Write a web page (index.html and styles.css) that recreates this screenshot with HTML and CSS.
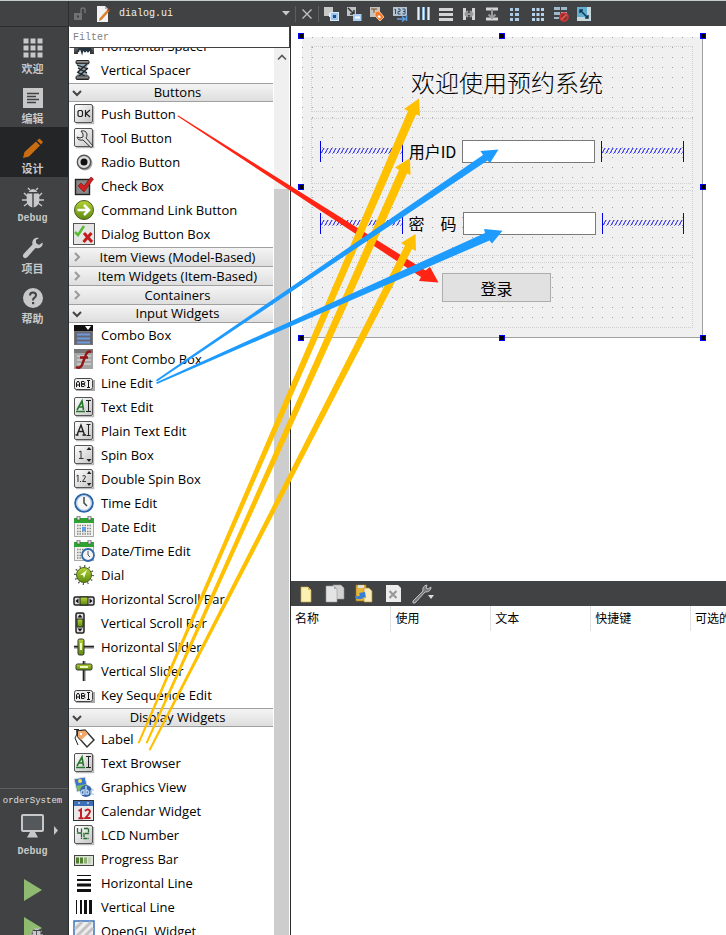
FILE: index.html
```html
<!DOCTYPE html>
<html lang="zh-CN">
<head>
<meta charset="utf-8">
<title>dialog.ui - orderSystem</title>
<link rel="stylesheet" href="styles.css">
</head>
<body>
<svg class="defs" aria-hidden="true">
  <defs>
    <linearGradient id="tile" x1="0" y1="0" x2="1" y2="1"><stop offset="0" stop-color="#fff"/><stop offset="1" stop-color="#c4c4c4"/></linearGradient>
    <linearGradient id="green" x1="0" y1="0" x2="0" y2="1"><stop offset="0" stop-color="#b5d334"/><stop offset="1" stop-color="#5d8a12"/></linearGradient>
    <linearGradient id="metal" x1="0" y1="0" x2="0" y2="1"><stop offset="0" stop-color="#bbb"/><stop offset="1" stop-color="#333"/></linearGradient>
    <symbol id="frame" viewBox="0 0 22 22"><path d="M3 20.500h17.500V3" fill="none" stroke="#bbb" stroke-width="1.500"/><rect x="1.500" y="1.500" width="18" height="18" rx="1.500" fill="url(#tile)" stroke="#555"/></symbol>
    <symbol id="cal" viewBox="0 0 22 22"><rect x="1.500" y="2.500" width="19" height="18" fill="#f2f2ee" stroke="#aaa"/><path d="M1 2h20v5H1z" fill="#2fa32f"/><path d="M4 0h3v4H4zM15 0h3v4h-3z" fill="#ddd" stroke="#555" stroke-width=".7"/><path d="M4 9.500h14M4 12.500h14M4 15.500h14M4 18h14" stroke="#888" stroke-width="1.500" stroke-dasharray="1.500 1"/></symbol>
    <symbol id="abi" viewBox="0 0 22 22"><path d="M3 18h18V8" fill="none" stroke="#aaa" stroke-width="2"/><rect x="1.500" y="6.500" width="18" height="11" rx="2" fill="#eee" stroke="#444"/><path d="M3.500 15v-4l1.500-2 1.500 2v4M3.500 13h3M8.500 9.500v5h2.500l1-1.200-1-1.300H8.500h2.500l1-1.200-1-1.300zM14 8.500h3M15.500 8.500v7M14 15.500h3" fill="none" stroke="#111"/></symbol>
    <symbol id="bug" viewBox="0 0 22 22"><path d="M6.500 5Q11-1 15.500 5zM5 6.500H10.300V20.500Q5 19 4.500 13zM17 6.500H11.700V20.500q5.300-1.500 5.800-7.500z" fill="currentColor"/><path d="M5 9L2 6M17 9l3-3M5 13H0M17 13h5M6 16l-4 3M16 16l4 3M8 3L6 1M14 3l2-2" stroke="currentColor" stroke-width="1.400"/></symbol>
    <symbol id="wrench" viewBox="0 0 22 22"><path d="M20.500 5.500l-3.500 2.500-3-2 0-3L17 1C12.500 0 9.500 3.500 10.500 7.500L1.500 17q-1.500 3 1 4 1.500 .5 3-1L13.500 11C18 12 21.500 9 20.500 5.500z" fill="currentColor"/></symbol>
    <symbol id="down" viewBox="0 0 10 8"><path d="M1 2l4 4 4-4" fill="none" stroke="#444" stroke-width="2"/></symbol>
    <symbol id="right" viewBox="0 0 10 10"><path d="M3 1l4 4-4 4" fill="none" stroke="#999" stroke-width="2"/></symbol>
    <pattern id="zig" width="4" height="6" patternUnits="userSpaceOnUse"><path d="M0.500 6L1.500 3.500L3.500 0.500" stroke="#0000e6" fill="none"/></pattern>
  </defs>
</svg>

<div class="app">
  <header class="topbar">
    <div class="filebar">
      <svg class="i14" viewBox="0 0 14 14"><path d="M1 6h8v7H1z" fill="#707274"/><path d="M8 6V3q0-2 2-2t2 2v3" fill="none" stroke="#707274" stroke-width="1.500"/><path d="M4 8.500h2v2H4z" fill="#404244"/></svg>
      <svg class="i16" viewBox="0 0 16 16"><path d="M2 0h8l3 3v13H2z" fill="#f2f2f2"/><path d="M10 0l3 3h-3z" fill="#aaa"/><path d="M4.500 12.500L13 3l2 1.500-8.500 9.500L4 15z" fill="#d9822b"/><path d="M12 4l1.500-1.500L15.500 4 14 5.500z" fill="#a3421a"/></svg>
      <select class="file" aria-label="Open file"><option>dialog.ui</option></select>
      <svg class="drop" viewBox="0 0 8 5"><path d="M0 0h8L4 4.500z" fill="#c8c8c8"/></svg>
    </div>
    <div class="tools">
      <button class="close" aria-label="Close"><svg viewBox="0 0 16 16"><path d="M3.500 3.500l9 9M12.500 3.500l-9 9" stroke="#c4c4c4" stroke-width="1.300"/></svg></button>
      <button aria-label="Edit widgets"><svg viewBox="0 0 16 16"><path d="M1 1h9v9H1z" fill="#c8c8c8"/><path d="M6 7h4v4H6z" fill="#f2f2f2"/><rect x="7.500" y="6.500" width="8" height="8" fill="#9cc4ec" stroke="#dbe9f7"/><path d="M10 9h3v3h-3z" fill="#124f91"/></svg></button>
      <button aria-label="Edit signals"><svg viewBox="0 0 16 16"><path d="M1 1h9v9H1z" fill="#bfc3c6"/><path d="M2 2l6 6M8 4v4H4" fill="none" stroke="#333" stroke-width="1.500"/><path d="M7 8h8.500v7H7z" fill="#a9cdf0"/><path d="M9 11.500h5" stroke="#fff" stroke-width="2"/></svg></button>
      <button aria-label="Edit buddies"><svg viewBox="0 0 16 16"><path d="M1 1h10v10H1z" fill="#c5c2bf"/><path d="M2 3h6M5 3v4" stroke="#7a4b2b"/><path d="M6 6l4-1 5 6-4 4-5-5z" fill="#f2792b" stroke="#f8c79f"/><path d="M10 9l2 2-1.500 1.500-2-2z" fill="#fff"/></svg></button>
      <button aria-label="Edit tab order"><svg viewBox="0 0 16 16"><path d="M1 1h14v9H1z" fill="#b7c3cf"/><path d="M2.500 4l1-1v5M6 3h2v2.500H6V8h2.500M10.500 3h2.500v5h-2.500M11 5.500h2" fill="none" stroke="#285377"/><path d="M5 13h7M10 10.500l3 2.500-3 2.500M14.500 9v6" fill="none" stroke="#5f9ee0" stroke-width="1.500"/></svg></button>
      <button aria-label="Lay out horizontally"><svg viewBox="0 0 16 16"><path d="M2 1h3v13H2zM7 1h3v13H7zM12 1h3v13h-3z" fill="#8fb8da"/><path d="M3.500 1v13M8.500 1v13M13.500 1v13" stroke="#e5f2fc"/></svg></button>
      <button aria-label="Lay out vertically"><svg viewBox="0 0 16 16"><path d="M1 2h14v3H1zM1 7h14v3H1zM1 12h14v3H1z" fill="#d4d4d4"/></svg></button>
      <button aria-label="Horizontal splitter"><svg viewBox="0 0 16 16"><path d="M2 2h3v12H2zM11 2h3v12h-3z" fill="#d4d4d4"/><path d="M4 8h8M4 8l3-3M4 8l3 3M12 8L9 5M12 8l-3 3" stroke="#9b9b9b" stroke-width="2"/></svg></button>
      <button aria-label="Vertical splitter"><svg viewBox="0 0 16 16"><path d="M2 1.500h12v3H2zM2 11.500h12v3H2z" fill="#d4d4d4"/><path d="M8 3v8M4.500 8.500L8 12l3.500-3.500" fill="none" stroke="#9b9b9b" stroke-width="2"/></svg></button>
      <button aria-label="Form layout"><svg viewBox="0 0 16 16"><path d="M3 2h3v3H3zM8 2h4v3H8zM3 7h3v3H3zM8 7h4v3H8zM3 12h3v3H3zM8 12h4v3H8z" fill="#a9cbe8"/></svg></button>
      <button aria-label="Grid layout"><svg viewBox="0 0 16 16"><path d="M2 2h3v3H2zM6.500 2h3v3h-3zM11 2h3v3h-3zM2 7h3v3H2zM6.500 7h3v3h-3zM11 7h3v3h-3zM2 12h3v3H2zM6.500 12h3v3h-3zM11 12h3v3h-3z" fill="#b5d3ec"/></svg></button>
      <button aria-label="Break layout"><svg viewBox="0 0 16 16"><path d="M1 1h6v3H1zM8 1h6v3H8zM1 6h6v3H1zM8 6h6v3H8zM1 11h5v2H1z" fill="#9fb9cc"/><circle cx="11" cy="11" r="4" fill="#8d3030" stroke="#d83535" stroke-width="1.600"/><path d="M8.500 13.500l5-5" stroke="#e4605c" stroke-width="1.600"/></svg></button>
      <button aria-label="Adjust size"><svg viewBox="0 0 16 16"><path d="M1 1h14v14H1z" fill="#c8d7dc"/><path d="M1 1h10v10H1z" fill="#62aed0"/><path d="M4 4l8 8M4 7V4h3M12 9v3H9" fill="none" stroke="#12384f" stroke-width="1.500"/></svg></button>
    </div>
  </header>

  <nav class="modes">
    <button class="mode"><svg viewBox="0 0 22 22"><path d="M1 1h6v6H1zM8 1h6v6H8zM15 1h6v6h-6zM1 8h6v6H1zM8 8h6v6H8zM15 8h6v6h-6zM1 15h6v6H1zM8 15h6v6H8zM15 15h6v6h-6z" fill="#c8c8c8" stroke="#404244"/></svg><span>欢迎</span></button>
    <button class="mode"><svg viewBox="0 0 22 22"><path d="M1 1h20v20H1z" fill="#c8c8c8"/><path d="M5 6.500h12M5 9.500h9M5 12.500h12M5 15.500h9" stroke="#404244" stroke-width="1.500"/></svg><span>编辑</span></button>
    <button class="mode active"><svg viewBox="0 0 22 22"><path d="M1 21l1.500-6L14 4.500 18 8.500 7 19.500zM15 3.500L17.500 1.500 21 5 19 7.500z" fill="#c96c12"/></svg><span>设计</span></button>
    <button class="mode"><svg viewBox="0 0 22 22"><use href="#bug"/></svg><span class="latin">Debug</span></button>
    <button class="mode"><svg viewBox="0 0 22 22"><use href="#wrench"/></svg><span>项目</span></button>
    <button class="mode"><svg viewBox="0 0 22 22"><circle cx="11" cy="11" r="10" fill="#c8c8c8"/><path d="M8 8.500Q8 5.500 11 5.500t3 2.700q0 1.500-1.500 2.500T11 13.500" fill="none" stroke="#404244" stroke-width="2"/><path d="M10 15h2.200v2.200H10z" fill="#404244"/></svg><span>帮助</span></button>
    <div class="kit">
      <div class="project">orderSystem</div>
      <button class="target" aria-label="Kit"><svg viewBox="0 0 40 26"><rect x="1" y="1" width="23" height="18" rx="2" fill="#c8c8c8"/><path d="M3 3h19v14H3z" fill="#55585a"/><path d="M10 19h5l3 5.500H7z" fill="#c8c8c8"/><path d="M34 13l4 4.500-4 4.500z" fill="#c8c8c8"/></svg></button>
      <div class="latin kitname">Debug</div>
      <button class="run" aria-label="Run"><svg viewBox="0 0 20 24"><path d="M1 1l18 11L1 23z" fill="#8fbb70"/></svg></button>
      <button class="run" aria-label="Start debugging"><svg viewBox="0 0 20 24"><path d="M1 1l18 11L1 23z" fill="#8fbb70"/><g transform="translate(7 11) scale(.6)" color="#c8c8c8"><circle cx="11" cy="11" r="8" fill="#404244"/><use href="#bug" width="22" height="22"/></g></svg></button>
    </div>
  </nav>

  <aside class="box">
    <input class="filter" type="text" placeholder="Filter" aria-label="Filter">
    <div class="scroller">
      <div class="widgets">
        <ul class="first">
          <li><svg viewBox="0 0 22 22"><path d="M1 1h4v18H1zM17 1h4v18h-4z" fill="url(#metal)"/><path d="M5 5l4 12 3-12 3 12 3-12M5 17l4-12 3 12 3-12 3 12" fill="none" stroke="#26343e" stroke-width="2"/></svg>Horizontal Spacer</li>
          <li><svg viewBox="0 0 22 22"><rect x="3" y="1.500" width="13" height="3.500" rx="1" fill="url(#metal)" stroke="#222"/><path d="M4 5h11l-2 6 2 6H4l2-6z" fill="#8da6b4"/><path d="M4 6l11 4M5 9l9 5M4 13l8 4M14 5L5 13M15 9l-9 8" stroke="#222" stroke-width="1.300"/><rect x="3" y="17" width="13" height="3.500" rx="1" fill="url(#metal)" stroke="#222"/></svg>Vertical Spacer</li>
        </ul>
        <button class="cat"><svg class="chev"><use href="#down"/></svg><span>Buttons</span></button>
        <ul>
          <li><svg viewBox="0 0 22 22"><use href="#frame"/><path d="M5 8.500l1-1h2.500l1 1v4l-1 1H6l-1-1zM12.500 7v7M17 7l-4 3.500 4 3.500" fill="none" stroke="#222" stroke-width="1.200"/></svg>Push Button</li>
          <li><svg viewBox="0 0 22 22"><use href="#frame"/><path d="M8 4q5-1 6 3 0 3-1 4l7 8-2 1.500-8-7.500q-5 1-6-3l3 1 3-1V7z" fill="#ddd" stroke="#333"/></svg>Tool Button</li>
          <li><svg viewBox="0 0 22 22"><circle cx="12" cy="12" r="7.500" fill="#aaa"/><circle cx="11" cy="11" r="6.700" fill="#ddd" stroke="#555" stroke-width="1.400"/><circle cx="11" cy="11" r="3.500" fill="#111"/></svg>Radio Button</li>
          <li><svg viewBox="0 0 22 22"><rect x="2.500" y="4.500" width="14" height="15" fill="#888" stroke="#222" stroke-width="1.400"/><path d="M5 11l3-3 3 3 7-9 2.500 2L11 17z" fill="#d21f1f" stroke="#7a0c0c" stroke-width=".6"/></svg>Check Box</li>
          <li><svg viewBox="0 0 22 22"><circle cx="11" cy="11" r="9.500" fill="url(#green)" stroke="#4c5a1c"/><path d="M4.500 11H16M11 6l5 5-5 5" fill="none" stroke="#fff" stroke-width="2.500"/></svg>Command Link Button</li>
          <li><svg viewBox="0 0 22 22"><rect x=".5" y=".5" width="21" height="21" fill="#e5e5e5" stroke="#555"/><path d="M2 9l3 3 6-9" fill="none" stroke="#58bb32" stroke-width="2.500"/><path d="M11 10l8 9M18.500 10l-8 9" stroke="#c51b1b" stroke-width="3"/></svg>Dialog Button Box</li>
        </ul>
        <button class="cat"><svg class="chev"><use href="#right"/></svg><span>Item Views (Model-Based)</span></button>
        <button class="cat"><svg class="chev"><use href="#right"/></svg><span>Item Widgets (Item-Based)</span></button>
        <button class="cat"><svg class="chev"><use href="#right"/></svg><span>Containers</span></button>
        <button class="cat"><svg class="chev"><use href="#down"/></svg><span>Input Widgets</span></button>
        <ul>
          <li><svg viewBox="0 0 22 22"><path d="M1 1h19v20H1z" fill="#777"/><path d="M1 1h19v6H1z" fill="#111"/><path d="M12 2h6l-3 4z" fill="#fff"/><path d="M2 8h17v12H2z" fill="#667"/><path d="M4 10.500h13M4 14.500h13M4 18.500h13" stroke="#6c9bdc" stroke-width="2"/></svg>Combo Box</li>
          <li><svg viewBox="0 0 22 22"><path d="M1 1h19v20H1z" fill="#a4a4a4"/><path d="M1 1h19v4H1z" fill="#777"/><path d="M4 8h14M4 12h14M4 16h14" stroke="#c4c4c4" stroke-width="2"/><path d="M18 4q-4-2-6 5L9 17q-2 4-6 2M7 9.500h8" fill="none" stroke="#941414" stroke-width="2.400"/></svg>Font Combo Box</li>
          <li><svg viewBox="0 0 22 22"><use href="#abi"/></svg>Line Edit</li>
          <li><svg viewBox="0 0 22 22"><use href="#frame"/><path d="M4 14l5-9 1.500 9M6 11h4M3 15.500h9" fill="none" stroke="#27772d" stroke-width="1.600"/><path d="M13 4.500h5M15.500 4.500v11M13 15.500h5" stroke="#222"/></svg>Text Edit</li>
          <li><svg viewBox="0 0 22 22"><use href="#frame"/><path d="M4 15l4-10 3.500 10M5.500 11.500h5M2.500 15h3M9.500 15H13" fill="none" stroke="#222" stroke-width="1.400"/><path d="M13.500 4.500h4M15.500 4.500v11M13.500 15.500h4" stroke="#222"/></svg>Plain Text Edit</li>
          <li><svg viewBox="0 0 22 22"><use href="#frame"/><path d="M6 8l2-1v7M6 14.500h4.500" fill="none" stroke="#333"/><path d="M13.500 6L16 3l2.500 3zM13.500 15h5L16 18z" fill="#222"/></svg>Spin Box</li>
          <li><svg viewBox="0 0 22 22"><use href="#frame"/><path d="M3.500 8L5 7v7M7 13.500h1M9.500 8q3-1.500 3 1l-3 4.500H13" fill="none" stroke="#333"/><path d="M14 6l2-3 2.500 3zM14 15h4.500L16 18z" fill="#222"/></svg>Double Spin Box</li>
          <li><svg viewBox="0 0 22 22"><circle cx="11" cy="11" r="8.800" fill="#eee" stroke="#2d65a8" stroke-width="2"/><circle cx="11" cy="11" r="7.300" fill="#f8f8f8" stroke="#aac8e9"/><path d="M11 5v6l3 3" fill="none" stroke="#444" stroke-width="1.500"/></svg>Time Edit</li>
          <li><svg viewBox="0 0 22 22"><use href="#cal"/><path d="M9 11h4v4H9z" fill="#5e9ff0"/></svg>Date Edit</li>
          <li><svg viewBox="0 0 22 22"><use href="#cal"/><circle cx="15" cy="15" r="6" fill="#f4f4f4" stroke="#3269ac" stroke-width="1.800"/><path d="M15 11v4l2 2" fill="none" stroke="#555"/></svg>Date/Time Edit</li>
          <li><svg viewBox="0 0 22 22"><circle cx="11" cy="11" r="9" fill="none" stroke="#555" stroke-width="2" stroke-dasharray="1.200 3.500"/><circle cx="11" cy="11" r="7.500" fill="url(#green)" stroke="#48611a"/><path d="M7 11l7-5-3 8-1-3z" fill="#f4ffd8"/></svg>Dial</li>
          <li><svg viewBox="0 0 22 22"><rect x="1" y="9" width="20" height="8" rx="1.500" fill="#ddd" stroke="#222" stroke-width="1.500"/><path d="M7 9h8v8H7z" fill="url(#green)" stroke="#222"/><path d="M5.500 10.500v5L2.500 13zM16.500 10.500v5l3-2.500z" fill="#111"/></svg>Horizontal Scroll Bar</li>
          <li><svg viewBox="0 0 22 22"><rect x="3" y="1" width="8" height="20" rx="1.500" fill="#ddd" stroke="#222" stroke-width="1.500"/><path d="M4 7h6v8H4z" fill="url(#green)" stroke="#222"/><path d="M4.500 5.500h5L7 2.500zM4.500 16.500h5L7 19.500z" fill="#111"/></svg>Vertical Scroll Bar</li>
          <li><svg viewBox="0 0 22 22"><path d="M1 11h20" stroke="#777" stroke-width="3"/><path d="M1 10.500h20" stroke="#222"/><rect x="5" y="3" width="6" height="16" rx="1.500" fill="url(#green)" stroke="#333"/><path d="M8 7v7" stroke="#eff8bd" stroke-width="2"/></svg>Horizontal Slider</li>
          <li><svg viewBox="0 0 22 22"><path d="M11 1v20" stroke="#777" stroke-width="3"/><path d="M10.500 1v20" stroke="#222"/><rect x="3" y="4" width="16" height="6" rx="1.500" fill="url(#green)" stroke="#333"/><path d="M7 7h8" stroke="#eff8bd" stroke-width="2"/></svg>Vertical Slider</li>
          <li><svg viewBox="0 0 22 22"><use href="#abi"/></svg>Key Sequence Edit</li>
        </ul>
        <button class="cat"><svg class="chev"><use href="#down"/></svg><span>Display Widgets</span></button>
        <ul>
          <li><svg viewBox="0 0 22 22"><path d="M4 3l8-1 9 10-7 7L5 9z" fill="#fff" stroke="#333" stroke-width="1.500"/><path d="M5 3.500l7-1 3 3.500-7 6-3-3z" fill="#f1a867"/><path d="M1 1.500h5M4 1v5l-2 4 3 7" fill="none" stroke="#222"/><circle cx="8" cy="6" r="1.200" fill="#fff"/></svg>Label</li>
          <li><svg viewBox="0 0 22 22"><use href="#frame"/><path d="M4 14l5-9 1.500 9M6 11h4M3 15.500h9" fill="none" stroke="#27772d" stroke-width="1.600"/><path d="M13 4.500h5M15.500 4.500v11M13 15.500h5" stroke="#222"/></svg>Text Browser</li>
          <li><svg viewBox="0 0 22 22"><path d="M1 3l11-2 3 12-11 3z" fill="#3975cf" stroke="#ddd"/><path d="M3 10l10-2 1 5-9 2z" fill="#7aba60"/><circle cx="7" cy="5" r="2" fill="#f1e353"/><circle cx="13" cy="15" r="6" fill="#3767a8"/><path d="M8 17q0-3 3-3v4q-3 1-3-1M13 10v8h2q2-3-2-4M21 14q-3-1-3 2t3 2" fill="none" stroke="#b8d2ef" stroke-width="1.500"/></svg>Graphics View</li>
          <li><svg viewBox="0 0 22 22"><rect x=".5" y=".5" width="20" height="20" fill="#e9e9e9" stroke="#333"/><path d="M1 1h19v5H1z" fill="#3c6fb5"/><path d="M5 3h2M14 3h2" stroke="#fff"/><path d="M5.500 11L8 9.500v9M5.500 18.300h5M12 11q3-3 5 0 0 2-4.500 7h5" fill="none" stroke="#c41e22" stroke-width="2"/></svg>Calendar Widget</li>
          <li><svg viewBox="0 0 22 22"><use href="#frame"/><path d="M4.500 4v5h4V4M8.500 9v6M11 4.500h4.500v5H11v5h4.500" fill="none" stroke="#246a2c" stroke-width="1.300" stroke-dasharray="4 .6"/></svg>LCD Number</li>
          <li><svg viewBox="0 0 22 22"><rect x="1.500" y="7.500" width="19" height="10" fill="#dce5d5" stroke="#444"/><path d="M3 9.500h3v6H3zM7 9.500h3v6H7z" fill="#4f7f2d"/><path d="M11 9.500h3v6h-3z" fill="#8ead79"/><path d="M15 9.500h3v6h-3z" fill="#c2d0b8"/></svg>Progress Bar</li>
          <li><svg viewBox="0 0 22 22"><path d="M4 3.500h14" stroke="#111"/><path d="M4 8h14" stroke="#111" stroke-width="2"/><path d="M4 13h14M4 18.500h14" stroke="#111" stroke-width="3"/></svg>Horizontal Line</li>
          <li><svg viewBox="0 0 22 22"><path d="M3.500 4v14" stroke="#111"/><path d="M8 4v14" stroke="#111" stroke-width="2"/><path d="M12.500 4v14M17.500 4v14" stroke="#111" stroke-width="3"/></svg>Vertical Line</li>
          <li><svg viewBox="0 0 22 22"><rect x="1" y="1" width="20" height="20" fill="#eee" stroke="#3b73ba" stroke-width="1.500"/><path d="M2 9l7-7M2 18L18 2M8 20L20 8M15 20l5-5" stroke="#c3c3c3" stroke-width="3"/></svg>OpenGL Widget</li>
        </ul>
      </div>
      <div class="scrollbar"><svg viewBox="0 0 10 8"><path d="M1 6.500l4-4 4 4" fill="none" stroke="#555" stroke-width="1.600"/></svg><div class="thumb"></div></div>
    </div>
  </aside>

  <main class="work">
    <section class="canvas">
      <form class="dialog">
        <div class="row title"><h1>欢迎使用预约系统</h1></div>
        <div class="row field">
          <svg class="spacer"><rect y="7" width="100%" height="6" fill="url(#zig)"/></svg>
          <label for="uid">用户ID</label><input id="uid" type="text">
          <svg class="spacer"><rect y="7" width="100%" height="6" fill="url(#zig)"/></svg>
        </div>
        <div class="row field">
          <svg class="spacer"><rect y="7" width="100%" height="6" fill="url(#zig)"/></svg>
          <label for="pwd">密　码</label><input id="pwd" type="text">
          <svg class="spacer"><rect y="7" width="100%" height="6" fill="url(#zig)"/></svg>
        </div>
        <div class="row submit"><button type="button">登录</button></div>
        <i class="grip t l"></i><i class="grip t c"></i><i class="grip t r"></i>
        <i class="grip m l"></i><i class="grip m r"></i>
        <i class="grip b l"></i><i class="grip b c"></i><i class="grip b r"></i>
      </form>
    </section>
    <section class="actions">
      <div class="actionbar">
        <button aria-label="New"><svg viewBox="0 0 20 20"><path d="M5 3h7l3 3v12H5z" fill="#fbf1b0" stroke="#c7a84a" stroke-width=".7"/><path d="M12 3l3 3h-3z" fill="#d3b557"/></svg></button>
        <button aria-label="Copy"><svg viewBox="0 0 20 20"><path d="M8 1h8l3 3v11H8z" fill="#d2d2d2" stroke="#999" stroke-width=".6"/><path d="M1 2h8l3 3v13H1z" fill="#e4e4e4" stroke="#999" stroke-width=".6"/><path d="M9 2l3 3H9z" fill="#aaa"/></svg></button>
        <button aria-label="Paste"><svg viewBox="0 0 20 20"><path d="M2 1h10v16H2z" fill="#e6b63c" stroke="#9a741b" stroke-width=".7"/><path d="M4 1h6v3H4z" fill="#ddd"/><path d="M10 4h5l3 3v11h-8z" fill="#f9ebbc" stroke="#b58e33" stroke-width=".7"/><path d="M1 12q4 1 5-1l-1-2 6-1 1 6-2-1q-3 4-9 1z" fill="#377fd4"/></svg></button>
        <button aria-label="Delete"><svg viewBox="0 0 20 20"><path d="M3 1h12l3 3v14H3z" fill="#ececec"/><path d="M6.500 7l7 7M13.500 7l-7 7" stroke="#999" stroke-width="2.200"/></svg></button>
        <button aria-label="Configure"><svg viewBox="0 0 20 20"><path d="M1 17L11 7q-1-5 4-6l-1 3 2 1 3-2q0 5-6 5L3 19H1z" fill="#77797b" stroke="#c4c4c4"/></svg></button><svg class="mini" viewBox="0 0 8 5"><path d="M0 0h6L3 4z" fill="#ddd"/></svg>
      </div>
      <table>
        <thead><tr><th>名称</th><th>使用</th><th>文本</th><th>快捷键</th><th>可选的</th></tr></thead>
      </table>
    </section>
  </main>

  <svg class="arrows" aria-hidden="true">
    <g fill="#ff2414"><path d="M178 115.200L425.500 270.500 430 267 438.500 282.500 419 281 421 277 177.500 116.200z"/></g>
    <g fill="#ffc000">
      <path d="M137.500 743L408 111 404 109 419 98.500 420 116 416 114.500 139.500 743.500z"/>
      <path d="M145.500 743L399 170 395 167.500 410 158 410.500 175 407 173.500 147.500 743.500z"/>
      <path d="M148.500 750L405 245.500 401 243 415.500 234 416 251 412 249 150.500 750.500z"/>
    </g>
    <g fill="#1e9bff">
      <path d="M156 380L483 155 480.500 151 498.500 149.500 490 163 487.500 160.500 157 381.500z"/>
      <path d="M156 382.500L485 233 484 229 502.500 230.800 492 243.500 489.500 240.500 157 384z"/>
    </g>
  </svg>
</div>
</body>
</html>
```
FILE: styles.css
```css
* { box-sizing: border-box; }

body {
  margin: 0;
  font-family: "Open Sans", "Noto Sans CJK SC", sans-serif;
  font-size: 13px;
  color: #000;
  background: #fff;
}

button {
  padding: 0;
  border: 0;
  background: none;
  font: inherit;
  color: inherit;
}

svg { display: block; flex: none; }
.defs { position: absolute; width: 0; height: 0; }

.app {
  position: relative;
  display: grid;
  grid-template: 26px minmax(0, 1fr) / 69px 221px minmax(0, 1fr);
  height: 100vh;
  overflow: hidden;
}

/* top bar */
.topbar {
  grid-column: 1 / -1;
  display: flex;
  background: #404244;
  border-top: 1px solid #c5cdc9;
}

.filebar {
  display: flex;
  align-items: center;
  gap: 8px;
  width: 295px;
  padding: 0 5px 0 73px;
  background: linear-gradient(#2c2d2f, #2c2d2f) 68px 0 / 1px 100% no-repeat;
}

.i14 { width: 14px; height: 14px; }
.i16 { width: 16px; height: 16px; }
.drop { width: 8px; height: 5px; }

.file {
  flex: 1;
  min-width: 0;
  padding: 0;
  border: 0;
  appearance: none;
  background: none;
  color: #f0f0f0;
  font: 10px "Liberation Mono", monospace;
}

.tools { display: flex; align-items: center; gap: 7px; }
.tools svg { width: 16px; height: 16px; }

.tools .close {
  padding: 0 3px;
  border: solid #5c5e60;
  border-width: 0 1px;
  margin-right: -3px;
}

/* mode selector */
.modes {
  display: flex;
  flex-direction: column;
  min-height: 0;
  background: #404244;
  border-top: 1px solid #2c2d2f;
  border-right: 1px solid #2c2d2f;
  color: #c8c8c8;
}

.mode {
  display: flex;
  flex: none;
  flex-direction: column;
  align-items: center;
  gap: 2px;
  height: 50px;
  padding: 10px 3px 0 0;
  font-size: 11px;
  font-weight: 700;
  line-height: 16px;
}

.mode svg { width: 22px; height: 22px; }
.mode.active { background: #232526; }
.latin { font: 700 10px/16px "Liberation Mono", monospace; }

.kit {
  display: flex;
  flex-direction: column;
  align-items: center;
  height: 147px;
  margin-top: auto;
  padding: 4px 3px 0 0;
  border-top: 1px solid #5c5e60;
}

.project { font: 9px/16px "Liberation Mono", monospace; color: #e0e0e0; }
.target { margin: 4px 0 5px 15px; }
.target svg { width: 40px; height: 26px; }
.kitname { margin-bottom: 18px; }
.run { margin-bottom: 14px; }
.run svg { width: 20px; height: 24px; }

/* widget box */
.box {
  display: flex;
  flex-direction: column;
  min-height: 0;
  background: #fff;
}

.filter {
  width: 100%;
  height: 22px;
  padding: 0 3px;
  border: 1px solid #404244;
  border-left-color: #fff;
  background: #fff;
  font: 10px "Liberation Mono", monospace;
}

.filter::placeholder { color: #808080; }

.scroller { display: flex; flex: 1; min-height: 0; overflow: hidden; }
.widgets { flex: 1; min-width: 0; }

.widgets ul {
  margin: 0;
  padding: 0 0 1px;
  list-style: none;
}

.widgets .first { margin-top: -14px; }

.widgets li {
  display: flex;
  align-items: center;
  gap: 6px;
  height: 24px;
  padding-left: 4px;
  white-space: nowrap;
}

.widgets li svg { width: 22px; height: 22px; }

.cat {
  display: flex;
  align-items: center;
  width: 100%;
  height: 19px;
  padding: 0 0 0 3px;
  border: solid #a0a0a0;
  border-width: 1px 0 0;
  background: linear-gradient(#f4f4f4, #dedede);
  line-height: 17px;
}

.cat:has(+ ul) { border-bottom-width: 1px; }
.cat span { flex: 1; }
.chev { width: 10px; height: 10px; }

.scrollbar {
  display: flex;
  flex-direction: column;
  align-items: center;
  width: 17px;
  padding-top: 5px;
  border: solid #fff;
  border-width: 0 1px;
  background: #f0f0f0;
}

.scrollbar svg { width: 10px; height: 8px; }
.thumb { flex: 1; width: 100%; margin-top: 128px; background: #cdcdcd; }

/* work area */
.work {
  display: grid;
  grid-template-rows: minmax(0, 555fr) minmax(0, 354fr);
  min-width: 0;
  border-left: 1px solid #2c2d2f;
}

.canvas { padding: 11px; overflow: hidden; }

.dialog {
  position: relative;
  display: grid;
  gap: 6px;
  width: 401px;
  padding: 9px;
  border: solid #a0a0a0;
  border-width: 0 1px 1px 0;
  background: conic-gradient(at 1px 1px, transparent 75%, #a0a0a0 0) 0 0 / 10px 10px #f0f0f0;
  font-size: 16px;
}

.row { display: flex; height: 66px; border: 1px dotted #d0d0d0; }
.title { align-items: center; justify-content: center; padding: 8px 0 0 10px; }
.title h1 { margin: 0; font-size: 24px; font-weight: 300; line-height: 32px; }
.field { align-items: center; gap: 6px; padding: 0 8px; }

.field label {
  font-family: "Noto Sans CJK SC", sans-serif;
  font-size: 16px;
  line-height: 23px;
}

.field input {
  width: 133px;
  height: 23px;
  border: 1px solid #7a7a7a;
  background: #fff;
}

.spacer {
  flex: 1;
  width: 0;
  height: 21px;
  border: solid #0000e6;
  border-width: 0 1px;
}

.submit { align-items: flex-start; justify-content: center; padding: 10px 11px 0 0; }

.submit button {
  width: 109px;
  height: 29px;
  border: 1px solid #adadad;
  background: #e1e1e1;
}

.grip {
  position: absolute;
  width: 6px;
  height: 6px;
  border: 1px solid #00f;
  background: #000;
}

.t { top: -4px; }
.m { top: 147px; }
.b { bottom: -4px; }
.l { left: -4px; }
.c { left: 197px; }
.r { right: -4px; }

/* action editor */
.actions { overflow: hidden; }

.actionbar {
  display: flex;
  align-items: center;
  gap: 9px;
  height: 25px;
  padding-left: 5px;
  background: #404244;
}

.actionbar svg { width: 20px; height: 20px; }
.actionbar .mini { width: 8px; height: 5px; margin: 8px 0 0 -13px; }

.actions table {
  width: 500px;
  table-layout: fixed;
  border-collapse: collapse;
}

.actions th {
  height: 25px;
  padding: 0 4px;
  border-right: 1px solid #e0e0e0;
  font-size: 12px;
  font-weight: 400;
  line-height: 16px;
  text-align: left;
}

.arrows {
  position: absolute;
  top: 0;
  left: 0;
  width: 100%;
  height: 100%;
  pointer-events: none;
}
```
